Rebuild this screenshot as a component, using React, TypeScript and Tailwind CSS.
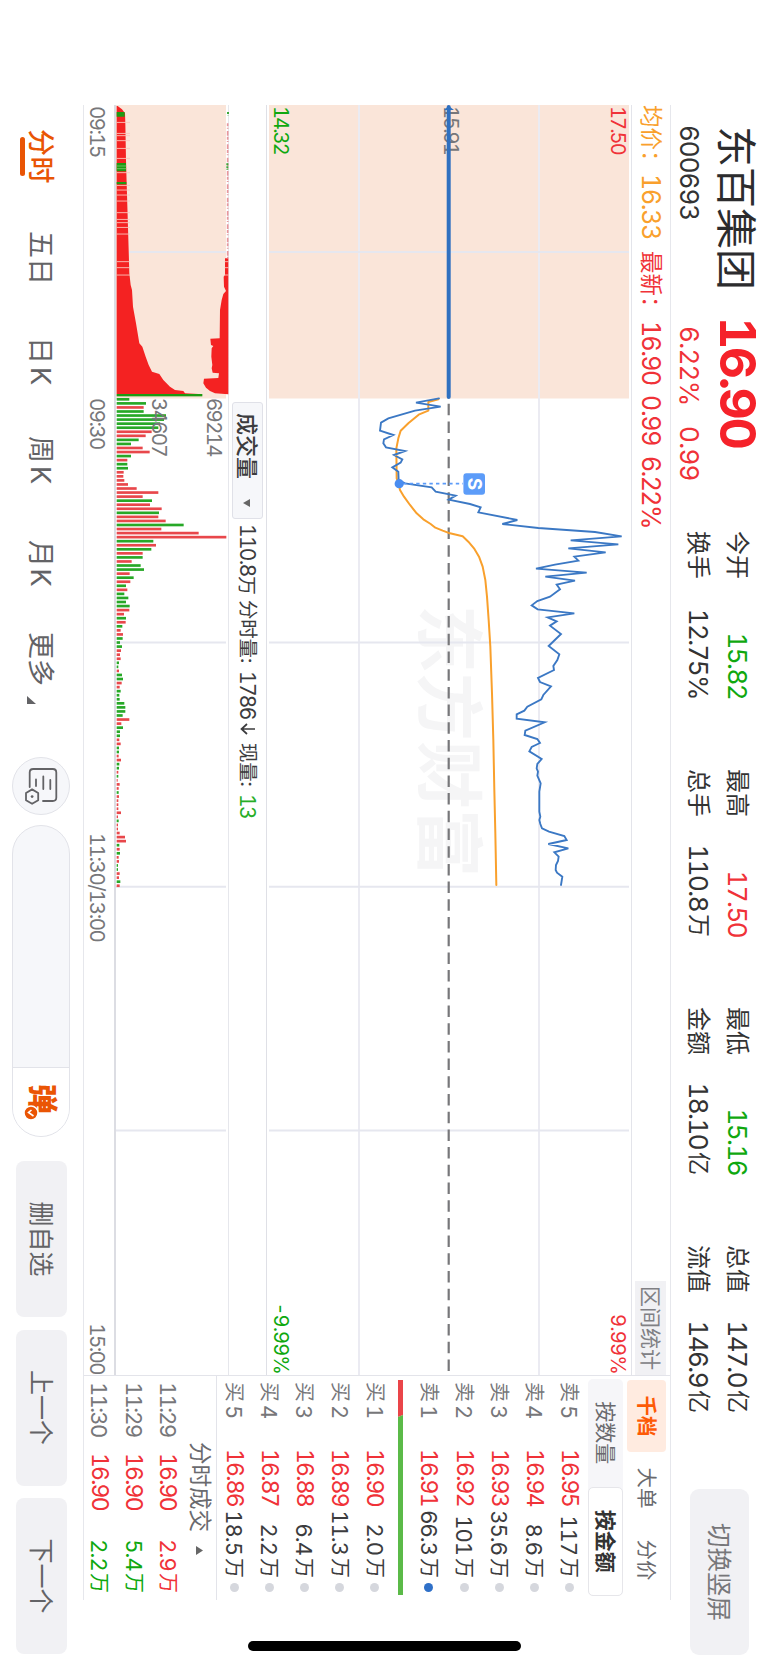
const QUOTE_STATS = [
    { label: "今开", value: "15.82", unit: "", color: "text-[#0fa80f]", label2: "换手", value2: "12.75%", unit2: "" },
    { label: "最高", value: "17.50", unit: "", color: "text-[#f03238]", label2: "总手", value2: "110.8", unit2: "万" },
    { label: "最低", value: "15.16", unit: "", color: "text-[#0fa80f]", label2: "金额", value2: "18.10", unit2: "亿" },
    { label: "总值", value: "147.0", unit: "亿", color: "text-[#333]", label2: "流值", value2: "146.9", unit2: "亿" },
];

const ASKS = [
    { label: "卖", level: 5, price: "16.95", amount: "117" },
    { label: "卖", level: 4, price: "16.94", amount: "8.6" },
    { label: "卖", level: 3, price: "16.93", amount: "35.6" },
    { label: "卖", level: 2, price: "16.92", amount: "101" },
    { label: "卖", level: 1, price: "16.91", amount: "66.3", active: true },
];

const BIDS = [
    { label: "买", level: 1, price: "16.90", amount: "2.0" },
    { label: "买", level: 2, price: "16.89", amount: "11.3" },
    { label: "买", level: 3, price: "16.88", amount: "6.4" },
    { label: "买", level: 4, price: "16.87", amount: "2.2" },
    { label: "买", level: 5, price: "16.86", amount: "18.5" },
];

const TRADES = [
    { time: "11:29", price: "16.90", amount: "2.9", color: "text-[#f03238]" },
    { time: "11:29", price: "16.90", amount: "5.4", color: "text-[#0fa80f]" },
    { time: "11:30", price: "16.90", amount: "2.2", color: "text-[#0fa80f]" },
];

// [time, price] in thirds of a pixel, price grows upwards
const PRICE_LINE = "55,207 68,138 80,212 92,135 115,55 128,33 152,30 165,70 178,42 190,40 202,48 213,105 225,72 238,97 248,92 262,67 275,85 300,86 310,105 322,185 335,197 347,257 359,236 372,300 382,332 397,325 420,442 432,397 444,505 456,675 469,755 481,602 493,745 505,595 517,707 530,613 542,625 554,555 566,498 578,650 590,526 602,615 614,560 628,570 650,540 663,502 676,485 688,503 700,613 712,533 724,560 737,540 762,573 798,536 823,568 840,562 858,550 870,552 894,504 906,510 919,543 945,520 958,514 980,472 992,463 1003,440 1016,440 1027,524 1052,466 1065,464 1077,502 1089,510 1101,485 1114,478 1137,515 1152,502 1165,500 1175,504 1187,502 1210,512 1235,508 1295,508 1310,511 1320,508 1332,511 1345,516 1355,537 1368,583 1380,590 1392,535 1405,595 1417,553 1430,566 1443,564 1455,558 1470,557 1478,561 1490,577 1515,573";
const AVG_LINE = "58,205 66,175 92,175 104,146 130,115 152,92 175,85 205,79 295,80 312,86 330,90 350,102 375,120 400,140 418,160 432,182 443,196 452,218 460,240 469,278 485,295 505,312 530,327 560,338 600,346 650,351 720,356 800,361 940,366 1080,370 1230,373 1360,376 1515,379";

// one bar per minute, negative = falling
const VOLUMES = [
    -38, -88, 81, -81, -148, -142, -130, -125, 105, 87, -66, -43, 78, 99, -43, 32, -32, -34, 21, 20, 23, 34, 60, 125, 78, -106, 100, 135, -127, 125,
    147, -201, 134, 246, 329, -110, 118, -104, 78, -78, 45, -72, -82, 39, -51, 41, -28, 32, -23, -35, -28, -39, 38, 22, -28, 27, -17, 12, 19, -18,
    -10, -16, 13, 10, 12, -7, -5, 7, -16, -19, 15, 9, -12, -8, -9, -23, -26, -26, -18, 38, 14, -19, -10, -10, 8, 12, -7, -7, 6, 13,
    -8, -7, 5, -5, 3, 9, 6, -6, 7, 5, 5, 5, 13, 4, -6, 4, 4, 9, 25, 28, -8, 9, -10, 6, 7, -4, -4, 9, 7, -11, 9,
];

const AUCTION_MATCHED = "48,50 48,53 58,66 70,75 100,76 210,78 280,80 380,83 480,86 550,88 585,92 600,96 650,99 700,108 760,118 770,127 800,137 825,146 845,156 852,178 870,190 890,210 900,225 903,250 910,255 912,295 912,50";
const AUCTION_UNMATCHED = "505,385 505,375 555,375 560,371 590,372 603,378 612,370 630,365 660,360 745,359 746,331 765,333 768,340 775,335 800,334 825,337 835,335 848,338 850,357 864,355 866,312 880,310 893,318 903,330 910,345 913,385";
const AUCTION_GAPS = [97, 130, 137, 152, 175, 205, 248, 286, 300, 315, 333, 368, 388, 398, 412, 432, 515, 533, 555];

const PERIODS = [
    { name: "五日", width: "w-[106px]" },
    { name: "日K", width: "w-[99px] tracking-[3px]" },
    { name: "周K", width: "w-[104px] tracking-[3px]" },
    { name: "月K", width: "w-[92px] tracking-[1.5px]" },
];

function Header() {
    return (
        <header className="ml-[105px] flex h-[97px] w-[1562px]">
            <div className="w-[426px] pl-[21px]">
                <div className="flex h-[61px] items-center">
                    <h1 className="w-[195px] pt-[4px] text-[41px] leading-none text-[#2c2c2e]">东百集团</h1>
                    <span className="-ml-[4px] pb-[2px] text-[50px] leading-none font-bold tracking-[-2.5px] text-[#f5222a]">16.90</span>
                </div>
                <div className="flex h-[35px] items-center text-[26px] leading-none tracking-[-1px]">
                    <span className="-ml-[1px] w-[201px] text-[#333]">600693</span>
                    <span className="w-[100px] tracking-[-0.7px] text-[#f03238]">6.22%</span>
                    <span className="tracking-[-0.7px] text-[#f03238]">0.99</span>
                </div>
            </div>
            <div className="flex w-[958px] gap-[70px] pt-[11px]">
                {QUOTE_STATS.map((s) => (
                    <div key={s.label} className="w-[168px] text-[26px] leading-none tracking-[-1.6px] text-[#333]">
                        <div className="flex h-[39px] items-center">
                            <span className="flex-1 text-[24px] tracking-normal">{s.label}</span>
                            <span className={s.color}>{s.value}</span>
                            {s.unit && <span className="ml-[3px] text-[23px] tracking-normal">{s.unit}</span>}
                        </div>
                        <div className="flex h-[39px] items-center">
                            <span className="flex-1 text-[24px] tracking-normal">{s.label2}</span>
                            <span>{s.value2}</span>
                            {s.unit2 && <span className="ml-[3px] text-[23px] tracking-normal">{s.unit2}</span>}
                        </div>
                    </div>
                ))}
            </div>
            <button className="mt-[19px] h-[59px] w-[166px] rounded-[9px] bg-[#f1f1f4] pt-[2px] text-[24.5px] leading-none text-[#77777a]">切换竖屏</button>
        </header>
    );
}

function PriceChart() {
    return (
        <div className="relative h-[365px] border-b border-[#dfe0e6] pt-[2px] text-[20px] leading-none tracking-[-1.9px]">
            <svg width="1270" height="360" className="block">
                <rect x="0" y="0" width="293.5" height="360" fill="#fae5d9" />
                <text x="500" y="205" fontSize="68" fontWeight="700" fill="#f5f5f6" letterSpacing="0" className="tracking-normal">东方财富</text>
                <g stroke="#e6e7ef" strokeWidth="2">
                    <path d="M0 90H1270M0 270H1270" stroke="#ebebf2" />
                    <path d="M147 0V360M537.5 0V360M781.7 0V360M1025.5 0V360" />
                </g>
                <path d="M293 180.3H1270" stroke="#77777a" strokeWidth="2.2" strokeDasharray="11.5 6.2" strokeDashoffset="12" />
                <text x="1" y="185" fontSize="20" fill="#77777a">15.91</text>
                <path d="M2 180.3H292" stroke="#2f70c0" strokeWidth="4" strokeLinecap="round" />
                <path d="M1 180.3L5 175V185Z" fill="#2f70c0" />
                <g transform="translate(275 259) scale(0.33333 -0.33333)" fill="none" strokeLinejoin="round" strokeLinecap="round">
                    <polyline points={AVG_LINE} stroke="#f9a02c" strokeWidth="6" />
                    <polyline points={PRICE_LINE} stroke="#3b78c4" strokeWidth="5.6" strokeLinejoin="miter" />
                </g>
                <path d="M378.7 226V166" stroke="#5c9cf9" strokeWidth="1.8" strokeDasharray="3.4 3.2" />
                <circle cx="378.7" cy="229.8" r="4.6" fill="#4a8df0" />
                <rect x="368.3" y="144" width="21.4" height="21.6" rx="3" fill="#5c9cf9" />
                <text x="379" y="161.4" fontSize="19" fontWeight="700" fill="#fff" textAnchor="middle" className="tracking-normal">S</text>
            </svg>
            <span className="absolute top-[3px] left-[1px] text-[#f03238]">17.50</span>
            <span className="absolute bottom-[4px] left-[1px] text-[#0fa80f]">14.32</span>
            <span className="absolute top-[3px] right-[1px] tracking-[-0.8px] text-[#f03238]">9.99%</span>
            <span className="absolute right-[1px] bottom-[4px] tracking-[-0.9px] text-[#0fa80f]">-9.99%</span>
        </div>
    );
}

function VolumeChart() {
    return (
        <div className="relative h-[114px] border-b-2 border-[#dcdde3] text-[20.5px] leading-none tracking-[-1.7px] text-[#77777a]">
            <svg width="1270" height="113" className="block overflow-visible">
                <rect x="0" y="2" width="293.5" height="110" fill="#fae5d9" />
                <path d="M147 2V112M537.5 2V112M781.7 2V112M1025.5 2V112" stroke="#e6e7ef" strokeWidth="2" />
                <g transform="translate(-15 128) scale(0.33333 -0.33333)">
                    <polygon points={AUCTION_MATCHED} fill="#f42222" />
                    <polygon points={AUCTION_UNMATCHED} fill="#f42222" />
                    <path d="M66 50V74H80V50ZM219 50V78H244V50ZM276 50V79H283V50Z" fill="#1d9a12" />
                    {AUCTION_GAPS.map((g) => (
                        <rect key={g} x={g - 1.2} y="50" width="2.6" height="40" fill="#fbc9bf" />
                    ))}
                    <path d="M228 50V79M236 50V79" stroke="#8fd088" strokeWidth="2" />
                    <path d="M100 383H505" stroke="#e8979c" strokeWidth="5" strokeDasharray="9 4 3 7 14 3" />
                    <path d="M66 384H76M220 382H240" stroke="#3aa838" strokeWidth="6" strokeDasharray="6 3" />
                    <path d="M515 374V386M533 374V386M555 374V386" stroke="#fbc9bf" strokeWidth="2.6" />
                    <rect x="912" y="50" width="7" height="257" fill="#1d9a12" />
                </g>
                <g transform="translate(275 128) scale(0.33333 -0.33333)">
                    {VOLUMES.map((v, i) => (
                        <rect key={i} x={54 + i * 12.16} y="50" width="8" height={Math.abs(v)} fill={v < 0 ? "#27a827" : "#e8474b"} />
                    ))}
                </g>
            </svg>
            <span className="absolute top-[4px] left-[293px]">69214</span>
            <span className="absolute top-[59px] left-[293px]">34607</span>
        </div>
    );
}

function ChartColumn() {
    return (
        <section className="w-[1270px] shrink-0">
            <div className="flex h-[39px] items-center border-b border-[#e3e4ea] text-[25px] leading-none tracking-[-1.6px] whitespace-nowrap text-[#f03238]">
                <span className="w-[69px] text-[22.5px] tracking-normal text-[#f9a02c]">均价：</span>
                <span className="w-[77px] tracking-[-1.3px] text-[#f9a02c]">16.33</span>
                <span className="w-[70px] text-[22.5px] tracking-normal">最新：</span>
                <span className="w-[74px]">16.90</span>
                <span className="w-[61px] tracking-[-1.3px]">0.99</span>
                <span className="flex-1">6.22%</span>
                <button className="h-[31px] w-[94px] bg-[#f1f1f4] text-[21px] leading-none tracking-normal text-[#808084]">区间统计</button>
            </div>
            <PriceChart />
            <div className="flex h-[38px] items-center border-b border-[#e6e7ec] pl-[297px] text-[21px] leading-none tracking-[-1.7px] text-[#3c3c3e]">
                <button className="mr-[5px] flex h-[31px] w-[117px] items-center justify-between rounded-[3px] border border-[#e0e1e8] bg-[#f6f7fa] pt-[1px] pr-[11px] pl-[10px] text-[22px] font-medium tracking-normal">
                    成交量
                    <svg width="8" height="7"><path d="M0 0H8L4 7Z" fill="#666" /></svg>
                </button>
                <span className="w-[52px]">110.8</span>
                <span className="w-[24px] pt-[1px] text-[19px]">万</span>
                <span className="w-[71px] pt-[1px] text-[19.5px] tracking-[-0.2px]">分时量:</span>
                <span className="w-[52px]">1786</span>
                <svg width="12" height="15" className="mr-[8px]" fill="none" stroke="#3c3c3e" strokeWidth="1.7"><path d="M6 0V13M1 8L6 13.5L11 8" /></svg>
                <span className="w-[51px] pt-[1px] text-[19.5px] tracking-[-0.2px]">现量:</span>
                <span className="text-[#27ae27]">13</span>
            </div>
            <VolumeChart />
            <div className="flex h-[32px] items-center px-[1px] pt-[2px] text-[20.5px] leading-none tracking-[-1.6px] text-[#77777a]">
                <span className="w-[292px]">09:15</span>
                <span className="w-[435px]">09:30</span>
                <span className="flex-1 tracking-[-1.5px]">11:30/13:00</span>
                <span>15:00</span>
            </div>
        </section>
    );
}

function DepthRow({ row }: { row: { label: string; level: number; price: string; amount: string; active?: boolean } }) {
    return (
        <div className="flex h-[35.15px] items-center text-[22px] leading-none tracking-[-1px]">
            <span className="w-[23px] text-[20px] tracking-normal text-[#77777a]">{row.label}</span>
            <span className="w-[44px] text-[#77777a]">{row.level}</span>
            <span className="w-[58px] text-[23px] tracking-[-1.8px] text-[#f03238]">{row.price}</span>
            <span className="flex-1 text-right text-[#3c3c3e]">{row.amount}</span>
            <span className="w-[23px] pl-[3px] text-[20px] tracking-normal text-[#3c3c3e]">万</span>
            <i className={`ml-[5px] size-[9px] rounded-full ${row.active ? "bg-[#2f70c8]" : "bg-[#d5d7dd]"}`} />
        </div>
    );
}

function OrderBook() {
    return (
        <aside className="w-[225px] shrink-0 border-l border-[#e3e4ea] text-[#6a6a6e]">
            <div className="flex h-[47px] items-start pt-[4px] pl-[4px] text-[20.5px] leading-none">
                <span className="flex h-[39px] w-[72px] items-center justify-center rounded-[4px] bg-[#ffebe0] pt-[1px] font-bold text-[#fd5a06]">千档</span>
                <span className="flex h-[39px] w-[72px] items-center justify-center pt-[1px]">大单</span>
                <span className="flex h-[39px] w-[72px] items-center justify-center pt-[1px]">分价</span>
            </div>
            <div className="ml-[3px] flex h-[35px] w-[217px] rounded-[5px] bg-[#f6f6f9] text-[21px] leading-none">
                <span className="flex flex-1 items-center justify-center">按数量</span>
                <span className="flex flex-1 items-center justify-center rounded-[5px] border border-[#e6e6ea] bg-white font-bold text-[#333]">按金额</span>
            </div>
            <div className="h-[372px] border-b border-[#e3e4ea] pt-[1px] pr-[8px] pl-[6px]">
                {ASKS.map((row) => <DepthRow key={row.level} row={row} />)}
                <svg width="215" height="5" className="mt-[8.5px] mb-[5.5px] -ml-[2px] block">
                    <path d="M0 0H35L37 5H0Z" fill="#ea4549" />
                    <path d="M35 0H215V5H37Z" fill="#5bba48" />
                </svg>
                {BIDS.map((row) => <DepthRow key={row.level} row={row} />)}
            </div>
            <div className="flex h-[31px] items-center pt-[1px] pl-[66px] text-[22.5px] leading-none">
                分时成交
                <svg width="9" height="7" className="ml-[14px]"><path d="M0 7H9L4.500 0Z" fill="#666" /></svg>
            </div>
            {TRADES.map((t, i) => (
                <div key={i} className="flex h-[34.3px] items-center pr-[7px] pl-[6px] text-[22px] leading-none tracking-[-0.9px]">
                    <span className="w-[71px] tracking-[-1.7px] text-[#77777a]">{t.time}</span>
                    <span className="text-[23px] tracking-[-1.8px] text-[#f03238]">{t.price}</span>
                    <span className={`flex-1 text-right ${t.color}`}>{t.amount}</span>
                    <span className={`w-[22px] pl-[2px] text-[20px] ${t.color}`}>万</span>
                </div>
            ))}
        </aside>
    );
}

function Toolbar() {
    return (
        <footer className="flex h-[83px] items-center pl-[129px] text-[27px] leading-none text-[#636366]">
            <span className="relative flex h-[42px] w-[102px] items-center pt-[2px] font-medium tracking-[0.5px] text-[#e95504]">
                分时
                <i className="absolute bottom-0 left-[8px] h-[5px] w-[39px] rounded-full bg-[#e95504]" />
            </span>
            {PERIODS.map((p) => <span key={p.name} className={`pt-[2px] ${p.width}`}>{p.name}</span>)}
            <span className="pt-[2px]">更多</span>
            <svg width="8" height="9" className="mt-[20px] ml-[10px]"><path d="M8 0V9H0Z" fill="#636366" /></svg>
            <button className="ml-[53px] flex size-[58px] shrink-0 items-center justify-center rounded-full border border-[#e2e3e9] bg-[#f6f7fa]">
                <svg width="38" height="34" viewBox="768 711 38 34" fill="none" stroke="#636366" strokeWidth="1.8" strokeLinecap="round">
                    <path d="M788 739.300H773.500Q770 739.300 770 735.800V716.200Q770 712.700 773.500 712.700H798.500Q802 712.700 802 716.200V726" />
                    <path d="M781 718.700H790M777.500 725.700H790M780.500 733H787" />
                    <path d="M794 730.800H801.200L804.800 736.900L801.200 743H794L790.400 736.900Z" strokeLinejoin="round" />
                    <circle cx="797.600" cy="736.900" r="1.400" fill="#636366" stroke="none" />
                </svg>
            </button>
            <div className="ml-[10px] flex h-[58px] w-[312px] shrink-0 overflow-hidden rounded-full border border-[#e2e3e9] bg-[#f6f7fa]">
                <div className="flex-1" />
                <div className="relative w-[69px] border-l border-[#e2e3e9] bg-white pt-[11px] pl-[16px] text-[30px] font-black text-[#ea5504]">
                    弹
                    <svg width="16" height="16" className="absolute top-[30px] left-[37px]">
                        <circle cx="8" cy="8" r="7" fill="#ea5504" stroke="#fff" strokeWidth="1.500" />
                        <path d="M5 7.500L7.500 10.500L11 5.500" fill="none" stroke="#fff" strokeWidth="1.600" />
                    </svg>
                </div>
            </div>
            <div className="ml-[24px] flex gap-[12.500px] text-[25px]">
                {["删自选", "上一个", "下一个"].map((b) => (
                    <button key={b} className="h-[51px] w-[156px] rounded-[8px] bg-[#f1f1f4] pt-[2px]">{b}</button>
                ))}
            </div>
        </footer>
    );
}

export default function App() {
    return (
        <div className="relative h-[1667px] w-[768px] overflow-hidden bg-white">
            {/* landscape screen turned clockwise */}
            <div className="relative h-[768px] w-[1667px] origin-top-left translate-x-[768px] rotate-90 bg-white font-['Inter','Noto_Sans_CJK_SC',sans-serif] tabular-nums">
                <Header />
                <main className="ml-[105px] flex h-[588px] w-[1495px] border-y border-[#e6e7ec]">
                    <ChartColumn />
                    <OrderBook />
                </main>
                <Toolbar />
                <div className="absolute top-[247px] left-[1641px] h-[273px] w-[10px] rounded-full bg-black" />
            </div>
        </div>
    );
}
